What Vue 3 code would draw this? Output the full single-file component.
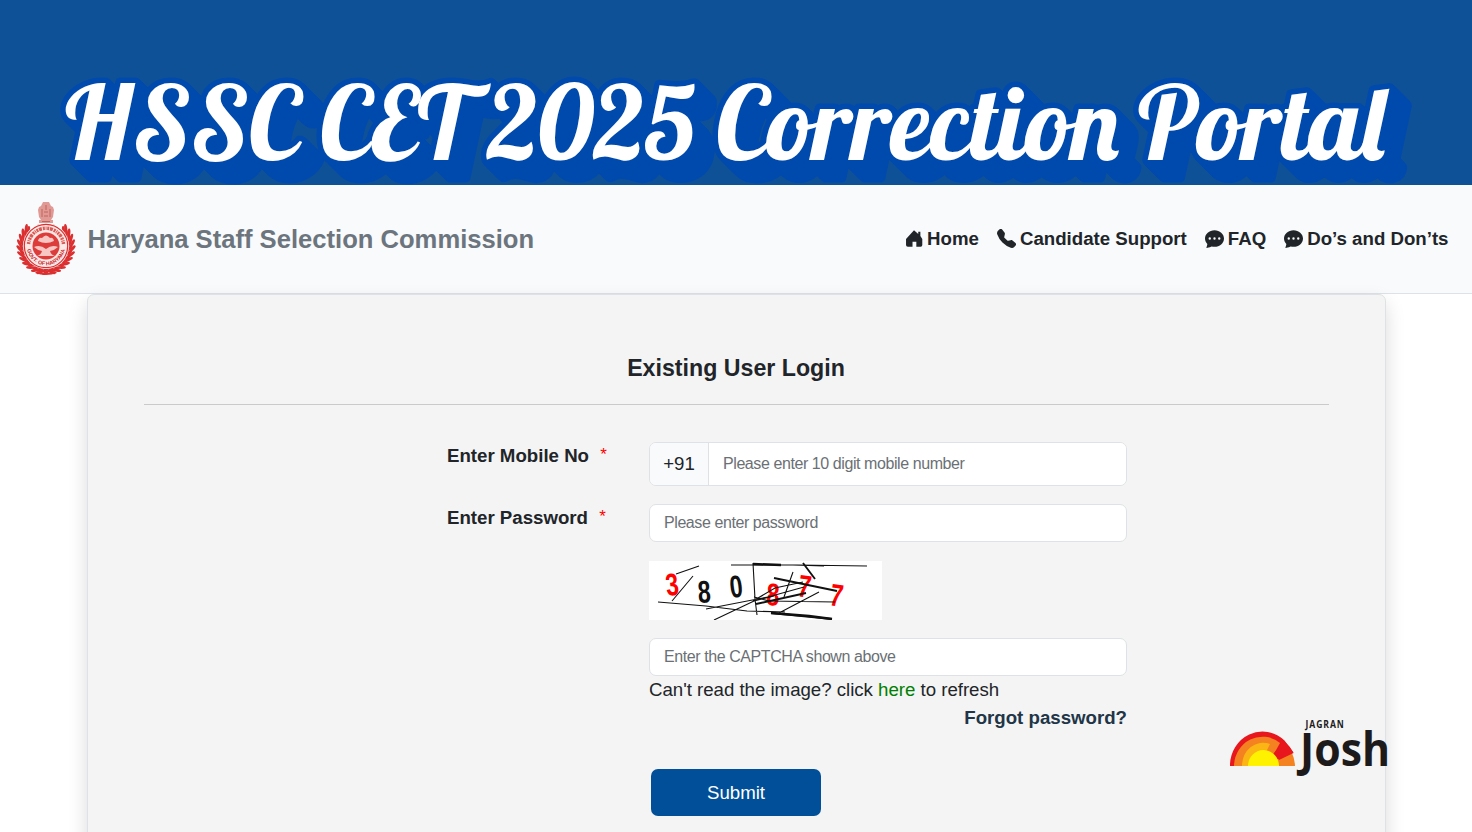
<template>
  <div class="page">
    <header class="banner">
      <svg class="banner-title" viewBox="0 0 1472 185" width="1472" height="185">
        <text v-for="w in titleWords" :key="w.text" :transform="`translate(${w.x} 160) scale(${w.sx} 1)`">{{ w.text }}</text>
      </svg>
    </header>

    <nav class="navbar">
      <div class="brand">
        <svg class="emblem" viewBox="0 0 60 74" width="60" height="74">
          <g class="lions">
            <path d="M25 19l-2-3-1-7 1-3 2-1 2-4h6l2 4 2 1 1 3-1 7-2 3z" />
            <path d="M23 19h14v3H23zM22 23h16l2 4H20z" />
            <path class="mane" d="M26 8v8M30 4v5M34 8v8M28 11h4M28 15h4M26 20.500h8" />
          </g>
          <g class="leaves">
            <ellipse v-for="(l, i) in leaves" :key="i" rx="4.300" ry="1.500" :transform="l" />
          </g>
          <circle cx="30" cy="45" r="23" class="ring-bg" />
          <circle cx="30" cy="45" r="21.700" class="ring" />
          <path class="script" d="M12.500 43a17.600 17.600 0 0 1 35 0" />
          <circle cx="30" cy="45" r="13.500" class="core" />
          <path class="lotus" d="M18 46q6-3 12 2 6-5 12-2-3 3-8 4 1 4 5 5H21q4-1 5-5-5-1-8-4zM22 40q1-4 4-3 4-5 8 0 3-1 4 3-8 4-16 0z" />
          <path id="arc" class="arc" d="M10.700 45a19.300 19.300 0 0 0 38.600 0" />
          <text class="motto"><textPath href="#arc" startOffset="50%" text-anchor="middle">GOVT. OF HARYANA</textPath></text>
          <path class="knot" d="M21 70q9 4 18 0l2 2q-11 4-22 0z" />
        </svg>
        <span>Haryana Staff Selection Commission</span>
      </div>
      <ul class="nav-links">
        <li v-for="n in navItems" :key="n.label">
          <svg class="nav-icon" :class="n.icon" viewBox="0 0 16 16"><path :d="icons[n.icon]" /></svg>
          <a>{{ n.label }}</a>
        </li>
      </ul>
    </nav>

    <main class="card">
      <h1>Existing User Login</h1>
      <form class="login" @submit.prevent>
        <label class="mobile-label">Enter Mobile No <i>*</i></label>
        <div class="input-group">
          <span class="prefix">+91</span>
          <input v-model="mobile" type="text" placeholder="Please enter 10 digit mobile number" />
        </div>

        <label class="password-label">Enter Password <i>*</i></label>
        <input v-model="password" class="field" type="password" placeholder="Please enter password" />

        <div class="captcha-block">
          <svg class="captcha" viewBox="0 0 233 59" width="233" height="59">
            <g class="digits">
              <text v-for="(c, i) in captcha" :key="i" :fill="c.color" :transform="c.at">{{ c.ch }}</text>
            </g>
            <path d="M27 13l23-8M23 40l21-25M9 41l48 4 41 5 38 1M82 4h62l31 1M104 4h44l70 1M57 48l62-12 36-10M65 59l40-19 20-5M104 2l2 36 2 16M105 36l15 4 66 1M144 11l-9 25M130 52l40-21M104 40l22-13 28-6" />
            <path class="thick" d="M125 17l63 13M154 2l12 16M107 43l50-11M122 52l61 6" />
            <path class="thicker" d="M122 52l38 3 23 3M104 3l28 1" />
          </svg>
          <input v-model="code" class="field" type="text" placeholder="Enter the CAPTCHA shown above" />
          <p class="refresh">Can't read the image? click <a>here</a> to refresh</p>
          <a class="forgot">Forgot password?</a>
          <button type="submit" class="submit">Submit</button>
        </div>
      </form>
    </main>

    <svg class="watermark" viewBox="0 0 164 62" width="164" height="62">
      <path fill="#e8161d" d="M0 46a32.500 34 0 0 1 54.500-25.500l9 12L32.500 46z" />
      <path fill="#f58220" d="M4 46a28.500 30 0 0 1 46-23L45 32l-12 14z" />
      <path fill="#f58220" d="M65 46a34 34 0 0 0-3-13L46 40v6z" />
      <path fill="#fbb616" d="M12 46a21 23 0 0 1 28-22l-4 8q9 4 13 14z" />
      <path fill="#e8161d" d="M44 33L54 21q6 5 9.500 12L49 40z" />
      <path fill="#fff200" d="M18 46a15.500 16 0 0 1 31 0z" />
      <g class="wm-small" transform="translate(75.500 8) scale(.88 1)"><text textLength="43.500">JAGRAN</text></g>
      <text class="wm-big" x="70" y="46" textLength="90" lengthAdjust="spacingAndGlyphs">Josh</text>
    </svg>
  </div>
</template>

<script setup>
import { ref } from 'vue'

const mobile = ref(''), password = ref(''), code = ref('')

const titleWords = [
  { text: 'HSSC', x: 64.5, sx: 1 },
  { text: 'CET', x: 320, sx: 0.998 },
  { text: '2025', x: 487.5, sx: 0.995 },
  { text: 'Correction', x: 716, sx: 1.016 },
  { text: 'Portal', x: 1138, sx: 1.012 },
]

const navItems = [
  { label: 'Home', icon: 'home' },
  { label: 'Candidate Support', icon: 'phone' },
  { label: 'FAQ', icon: 'chat' },
  { label: 'Do’s and Don’ts', icon: 'chat' },
]

const icons = {
  home: 'M8 .3l4 3.500V1.700h2v4L15.800 8.500V14.200q0 1.500-1.500 1.500H10.200v-4.700H6.600v4.700H2.200q-1.700 0-1.700-1.500V8.500z',
  phone: 'M1.900.5a1.750 1.750 0 0 1 2.600.16l1.800 2.300c.33.42.45.98.32 1.500l-.55 2.200a.68.68 0 0 0 .18.65l2.460 2.460a.68.68 0 0 0 .65.18l2.190-.55c.52-.13 1.080-.01 1.500.32l2.300 1.800c.83.64.9 1.870.16 2.600l-1.030 1.040c-.74.74-1.850 1.070-2.880.7a18.600 18.600 0 0 1-7.010-4.420A18.600 18.600 0 0 1 .17 4.430c-.36-1.030-.04-2.140.7-2.880z',
  chat: 'M16 8c0 3.870-3.580 7-8 7a9 9 0 0 1-2.350-.31c-.58.3-1.920.87-4.170 1.240-.2.030-.35-.18-.27-.36.350-.84.67-1.950.77-2.970C.75 11.360 0 9.760 0 8c0-3.870 3.580-7 8-7s8 3.130 8 7M5 8a1 1 0 1 0-2 0 1 1 0 0 0 2 0m4 0a1 1 0 1 0-2 0 1 1 0 0 0 2 0m3 1a1 1 0 1 0 0-2 1 1 0 0 0 0 2',
}

const captcha = [
  { ch: '3', color: '#f00', at: 'translate(18 35) rotate(-7) scale(.8 1.08)' },
  { ch: '8', color: '#111', at: 'translate(49.5 42) rotate(-4) scale(.8 1.08)' },
  { ch: '0', color: '#111', at: 'translate(82 37) rotate(-7) scale(.8 1.08)' },
  { ch: '8', color: '#f00', at: 'translate(117 44) rotate(3) scale(.8 1.08)' },
  { ch: '7', color: '#f00', at: 'translate(147.5 35) rotate(9) scale(.8 1.08)' },
  { ch: '7', color: '#f00', at: 'translate(179.5 44) rotate(9) scale(.8 1.08)' },
]

// wreath leaves, two rows running up both sides from the knot
const leaves = []
for (let a = -42; a <= 222; a += 12) {
  const r = a * Math.PI / 180
  const tilt = a < 90 ? -55 : 55
  for (const d of [23.5, 26.5]) {
    leaves.push(`translate(${(30 + d * Math.cos(r)).toFixed(1)} ${(45 + d * Math.sin(r)).toFixed(1)}) rotate(${a + tilt})`)
  }
}
</script>

<style>
body{margin:0;overflow:hidden;background:#fff}
</style>

<style scoped>
.page{height:832px;overflow:hidden;position:relative;font-family:"Liberation Sans",Arial,sans-serif;font-size:18.67px;color:#212529}

.banner{height:185px;background:#0f5197}
.banner-title{display:block;font-family:Lobster,"Liberation Serif",serif;font-size:102.100px;fill:#fff;stroke:#004aad;stroke-width:11px;stroke-linejoin:round;paint-order:stroke;filter:drop-shadow(1px 1px 0 #004aad) drop-shadow(2px 2px 0 #004aad) drop-shadow(4px 4px 0 #004aad) drop-shadow(8px 8px 0 #004aad) drop-shadow(2px 2px 0 #004aad)}

.navbar{height:109px;box-sizing:border-box;border-bottom:1px solid #dee2e6;background:#f8fafc;display:flex;justify-content:space-between;align-items:center;padding:0 23.500px 0 16px}
.brand{display:flex;align-items:center;gap:11.500px;color:#6c757d;font-size:25.600px;font-weight:700}
.emblem{display:block;position:relative;top:-1px}
.emblem path,.emblem ellipse{fill:#dc2f2f}
.emblem .lions path{fill:#e09a95}
.emblem .lions .mane{fill:none;stroke:#c4605a;stroke-width:1}
.emblem .ring-bg{fill:#f8fafc}
.emblem .ring{fill:#fbe9e8;stroke:#dc2f2f;stroke-width:1.200}
.emblem .script{fill:none;stroke:#dc5a55;stroke-width:3.500;stroke-dasharray:2 .8 1 .7 2 .7 3 1}
.emblem .core{fill:#dc3c3a}
.emblem .lotus{fill:#f8c7c4}
.emblem .arc{fill:none}
.emblem .motto{font-size:5.400px;font-weight:700;fill:#c92424}
.nav-links{display:flex;gap:18px;list-style:none;margin:0;padding:0;font-weight:700}
.nav-links li{display:flex;align-items:center;gap:4px}
.nav-icon{width:19px;height:19px;margin-bottom:2px;fill:#212529}
.nav-icon.home{width:18px;height:17px}

.card{box-sizing:border-box;width:1299px;height:620px;margin-left:87px;padding:0 56px;border:1px solid #dee2e6;border-radius:7px;background:#f4f4f4;box-shadow:0 9px 19px rgba(0,0,0,.15)}
h1{margin:0;padding:59px 1px 0 0;height:50px;line-height:28px;font-size:23.200px;text-align:center;border-bottom:1px solid #c9cacb}
.login{display:grid;grid-template-columns:202px 478px;justify-content:start;padding:37px 0 0 303px}
label{font-weight:700;line-height:28px}
label i{color:#f00;font-style:normal;font-weight:400;font-size:17px;line-height:1;margin-left:6px;vertical-align:2px}
.mobile-label{height:62px}
.input-group{display:flex;height:44px;box-sizing:border-box;border:1px solid #dee2e6;border-radius:7px;overflow:hidden;background:#fff}
.prefix{width:59px;box-sizing:border-box;display:flex;align-items:center;justify-content:center;background:#f8fafc;border-right:1px solid #dee2e6}
input{font-family:inherit;font-size:16px;letter-spacing:-.42px;color:#212529;border:0;outline:0;padding:0 14px;background:#fff}
input::placeholder{color:#6b7075;opacity:1}
.input-group input{flex:1}
.field{box-sizing:border-box;height:38px;border:1px solid #dee2e6;border-radius:7px}
.captcha-block{grid-column:2;display:flex;flex-direction:column;margin-top:19px}
.captcha{display:block;background:#fff;margin-bottom:18px}
.captcha .digits{font-size:29px;font-weight:700}
.captcha path{fill:none;stroke:#111;stroke-width:1.100}
.captcha .thick{stroke-width:1.900}
.captcha .thicker{stroke-width:2.500}
.refresh{margin:0;line-height:28px;letter-spacing:-.02px}
.refresh a{color:#008000}
.forgot{align-self:flex-end;line-height:28px;font-weight:700;color:#213547}
.submit{width:170px;height:47px;margin:37px 0 0 2px;border:0;border-radius:7px;background:#004f98;color:#fff;font:inherit}

.watermark{position:absolute;left:1230px;top:720px;overflow:visible;fill:#1c1a1b;font-family:"Open Sans",sans-serif;font-weight:700}
.wm-small{font-size:9.800px}
.wm-big{font-size:46px}
</style>
